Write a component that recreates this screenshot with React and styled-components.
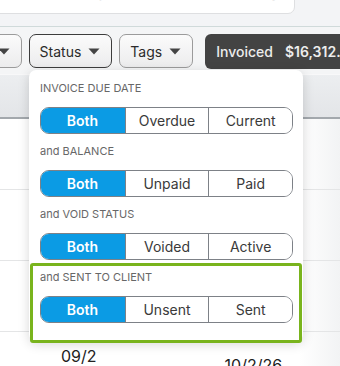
import React from 'react';
import styled, { createGlobalStyle } from 'styled-components';

const GlobalStyle = createGlobalStyle`
  body {
    margin: 0;
    font-family: Inter, "Noto Sans", sans-serif;
    background: #fff;
  }
`;

const FILTERS = [
  { label: 'INVOICE DUE DATE', options: ['Both', 'Overdue', 'Current'] },
  { label: 'and BALANCE', options: ['Both', 'Unpaid', 'Paid'] },
  { label: 'and VOID STATUS', options: ['Both', 'Voided', 'Active'] },
  { label: 'and SENT TO CLIENT', options: ['Both', 'Unsent', 'Sent'] },
];

const Caret = () => (
  <svg width="12" height="7" viewBox="0 0 12 7">
    <path d="M0.5 0.5 H11.5 L6 6.5 Z" fill="#444" />
  </svg>
);

const App = () => {
  return (
    <Page>
      <GlobalStyle />
      <SearchArea>
        <SearchBox>
          <Placeholder>Search by client, invoice # or tag</Placeholder>
        </SearchBox>
      </SearchArea>

      <Toolbar>
        <DropButton>
          Date <Caret />
        </DropButton>
        <DropButton open>
          Status <Caret />
        </DropButton>
        <DropButton>
          Tags <Caret />
        </DropButton>
        <Totals>
          <span>Invoiced</span>
          <strong>$16,312.50</strong>
        </Totals>
      </Toolbar>

      <TableHead />
      <Row />
      <Row />
      <Row />
      <Row>
        <Cell left={61} top={14}>09/2</Cell>
        <Cell left={128} top={23}>10/2/26</Cell>
      </Row>

      <FilterMenu>
        {FILTERS.map(group => (
          <Group key={group.label}>
            <GroupLabel>{group.label}</GroupLabel>
            <Segmented>
              {group.options.map((opt, i) => (
                <Segment key={opt} active={i === 0}>
                  {opt}
                </Segment>
              ))}
            </Segmented>
          </Group>
        ))}
      </FilterMenu>
      <Highlight />
    </Page>
  );
};

export default App;

const Page = styled.div`
  position: relative;
  width: 340px;
  height: 366px;
  overflow: hidden;
  background: #fff;
`;

const SearchArea = styled.div`
  height: 26px;
  background: #f3f4f6;
  border-bottom: 1px solid #d0dada;
  overflow: hidden;
`;

const SearchBox = styled.div`
  margin: -30px 0 0 -10px;
  width: 305px;
  height: 44px;
  background: #fff;
  border: 1px solid #dedfe1;
  border-radius: 7px;
  box-sizing: border-box;
  padding: 0 0 0 40px;
`;

const Placeholder = styled.div`
  font-size: 16px;
  line-height: 20px;
  padding-top: 10px;
  color: #b4b6b9;
  white-space: nowrap;
`;

const Toolbar = styled.div`
  height: 47px;
  box-sizing: border-box;
  padding-top: 7px;
  margin-left: -51px;
  display: flex;
  align-items: flex-start;
  gap: 7px;
  background: #f4f5f6;
  white-space: nowrap;
`;

const DropButton = styled.div`
  height: 34px;
  box-sizing: border-box;
  display: flex;
  align-items: center;
  gap: 7px;
  padding: 0 11px 0 10px;
  border: 1px solid ${({ open }) => (open ? '#3d3d3d' : '#9b9b9b')};
  border-radius: 7px;
  background: linear-gradient(#fbfbfb, #ececed);
  font-size: 14px;
  color: #2b2b2b;
  flex-shrink: 0;
`;

const Totals = styled.div`
  height: 35px;
  margin-left: 5px;
  display: flex;
  align-items: center;
  gap: 12px;
  padding: 0 11px;
  border-radius: 6px;
  background: #434343;
  color: #ececec;
  font-size: 14px;
  font-weight: 500;
  flex-shrink: 0;

  strong {
    font-weight: 600;
  }
`;

const TableHead = styled.div`
  height: 45px;
  box-sizing: border-box;
  border-top: 1px solid #f8f8f9;
  border-bottom: 2px solid #a3a8ad;
  background: linear-gradient(#eceef0, #e3e5e8);
`;

const Row = styled.div`
  position: relative;
  height: 71px;
  box-sizing: border-box;
  border-bottom: 1px solid #e4e5e6;
  background: linear-gradient(to right, #fff 88%, #f2f3f4);
  display: flex;
  align-items: flex-start;
`;

const Cell = styled.div`
  margin-left: ${({ left }) => left}px;
  padding-top: ${({ top }) => top}px;
  font-size: 16px;
  line-height: 20px;
  color: #222;
`;

const FilterMenu = styled.div`
  position: absolute;
  left: 29px;
  top: 70px;
  width: 274px;
  box-sizing: border-box;
  padding: 11px 10px 18px 11px;
  background: #fff;
  border-radius: 7px;
  box-shadow: 0 3px 12px rgba(0, 0, 0, 0.16);
  display: flex;
  flex-direction: column;
  gap: 10px;
`;

const Group = styled.div`
  display: flex;
  flex-direction: column;
  gap: 12px;
`;

const GroupLabel = styled.div`
  font-size: 11px;
  line-height: 14px;
  color: #676767;
`;

const Segmented = styled.div`
  display: grid;
  grid-template-columns: repeat(3, 1fr);
  height: 27px;
  box-sizing: border-box;
  border: 1px solid #7d8187;
  border-radius: 9px;
  overflow: hidden;
`;

const Segment = styled.div`
  display: flex;
  align-items: center;
  justify-content: center;
  font-size: 14px;
  color: ${({ active }) => (active ? '#fff' : '#3a3a3a')};
  font-weight: ${({ active }) => (active ? 600 : 400)};
  background: ${({ active }) => (active ? '#0b9be4' : '#fff')};
  margin: ${({ active }) => (active ? '-1px 0 -1px -1px' : '0')};

  & + & {
    border-left: 1px solid #7d8187;
  }
`;

const Highlight = styled.div`
  position: absolute;
  left: 30px;
  top: 263px;
  width: 272px;
  height: 80px;
  box-sizing: border-box;
  border: 3px solid #79b41d;
  border-radius: 3px;
`;
